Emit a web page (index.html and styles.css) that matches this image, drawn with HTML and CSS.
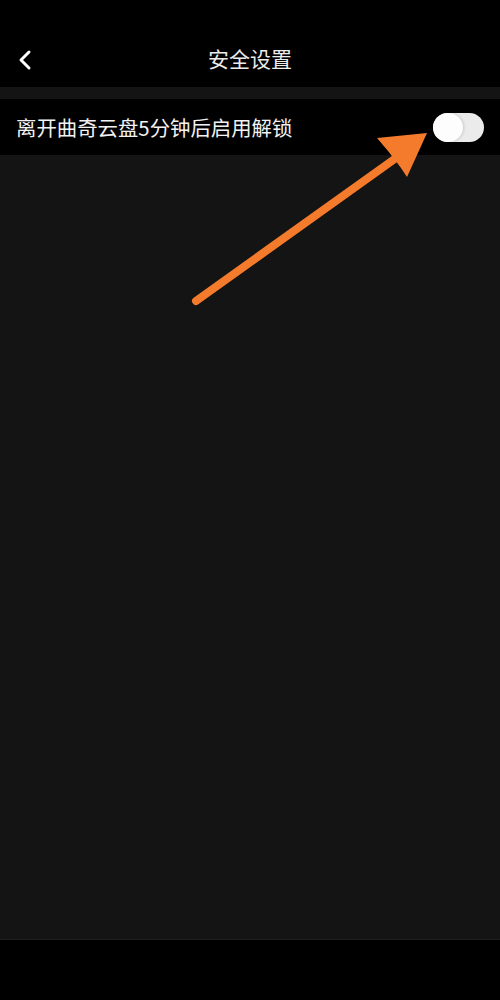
FILE: index.html
```html
<!DOCTYPE html>
<html lang="zh-CN">
<head>
  <meta charset="UTF-8" />
  <meta name="viewport" content="width=device-width, initial-scale=1.0"/>
  <title>安全设置</title>
  <link rel="stylesheet" href="styles.css">
</head>
<body>
  <div class="screen">
    <div class="header">
      <a class="back" href="#">
        <svg width="14" height="22" viewBox="0 0 14 22">
          <polyline points="11,3 3,11 11,19" fill="none" stroke="#fff" stroke-width="3" stroke-linecap="round" stroke-linejoin="round"/>
        </svg>
      </a>
      <h1>安全设置</h1>
    </div>

    <div class="settings">
      <div class="row">
        <span class="label">离开曲奇云盘5分钟后启用解锁</span>
        <span class="switch"><span class="knob"></span></span>
      </div>
    </div>

    <div class="content"></div>
    <div class="navbar"></div>

    <!-- pointer to the switch -->
    <svg class="pointer" width="500" height="320" viewBox="0 0 500 320">
      <line x1="196" y1="301" x2="396" y2="158" stroke="#f47b2c" stroke-width="8" stroke-linecap="round"/>
      <polygon points="427,133 377,138 388,151 395,160 401,168 407,177" fill="#f47b2c"/>
    </svg>
  </div>
</body>
</html>
```

FILE: styles.css
```css
body {
  margin: 0;
  background-color: #000;
  font-family: 'Noto Sans CJK SC', 'Noto Sans', sans-serif;
  color: #f0f0f0;
}

.screen {
  position: relative;
  width: 500px;
  height: 1000px;
  display: flex;
  flex-direction: column;
  background-color: #000;
  overflow: hidden;
}

.header {
  height: 54px;
  margin-top: 33px;
  display: flex;
  align-items: center;
  justify-content: center;
  position: relative;
}

.back {
  position: absolute;
  left: 18px;
  top: 16px;
  display: flex;
}

h1 {
  margin: 0 0 4px;
  font-size: 21px;
  font-weight: normal;
  color: #ececec;
  line-height: 1;
}

.settings {
  border-top: 12px solid #141414;
}

.row {
  height: 56px;
  display: flex;
  align-items: center;
  justify-content: space-between;
  padding: 0 16px;
  background-color: #000;
}

.label {
  font-size: 20.4px;
  color: #f2f2f2;
}

.switch {
  width: 51px;
  height: 29px;
  border-radius: 15px;
  background-color: #ebebeb;
  display: flex;
  align-items: center;
}

.knob {
  width: 30px;
  height: 29px;
  border-radius: 50%;
  background-color: #fdfdfd;
  box-shadow: 1px 0 3px rgba(0, 0, 0, 0.15);
}

.content {
  flex: 1;
  background-color: #141414;
}

.navbar {
  height: 60px;
  background-color: #000;
  border-top: 1px solid #1e1e1e;
}

.pointer {
  position: absolute;
  left: 0;
  top: 0;
}
```
